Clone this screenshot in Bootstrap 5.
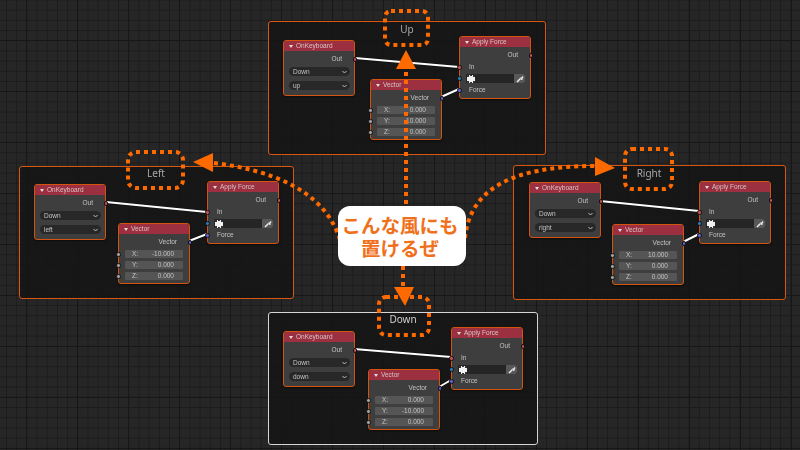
<!DOCTYPE html>
<html lang="ja">
<head>
<meta charset="UTF-8">
<title>Node frames</title>
<link href="https://cdn.jsdelivr.net/npm/bootstrap@5.3.0/dist/css/bootstrap.min.css" rel="stylesheet">
<style>
html, body { height: 100%; }
body {
  overflow: hidden;
  background-color: #262626;
  font-family: "Liberation Sans", sans-serif;
}
.canvas {
  width: 800px; height: 450px;
  background-image:
    linear-gradient(#171717 1px, transparent 1px),
    linear-gradient(90deg, #171717 1px, transparent 1px),
    linear-gradient(#1c1c1c 1px, transparent 1px),
    linear-gradient(90deg, #1c1c1c 1px, transparent 1px);
  background-size: 51px 51px, 51px 51px, 10.2px 10.2px, 10.2px 10.2px;
  background-position: 0 40px, 26px 0, 0 -0.5px, 6px 0;
}
.frame { background: rgba(22,22,22,.92); border: 1px solid #d9560f; border-radius: 3px; }
.frame.active { border-color: #d5d5d5; }
.frame-title { font-family: "Noto Sans", sans-serif; font-size: 10px; line-height: 14px; width: 80px; color: #a8a8a8; text-align: center; filter: blur(.3px); }
.f-up { left: 268px; top: 21px; width: 278px; height: 134px; }
.f-left { left: 19px; top: 166px; width: 275px; height: 133px; }
.f-right { left: 513px; top: 165px; width: 273px; height: 135px; }
.f-down { left: 268px; top: 312px; width: 270px; height: 133px; }
.t-up { left: 367px; top: 22px; }
.t-left { left: 116px; top: 166px; }
.t-right { left: 609px; top: 166px; }
.t-down { left: 363px; top: 312px; color: #cdcdcd; }
.bnode {
  width: 72px; background: #3e3e3e; border: 1px solid #d4540f; border-radius: 3px;
  font-size: 6.5px; line-height: 8px; color: #c4c4c4;
  box-shadow: 0 1px 2px rgba(0,0,0,.5);
  filter: blur(.25px);
}
.bnode-head { height: 10px; padding-left: 5px; background: #9c3040; border-radius: 2px 2px 0 0; color: #d8c4c6; gap: 3px; }
.caret { width: 0; height: 0; border-left: 2px solid transparent; border-right: 2px solid transparent; border-top: 3px solid #ddd; }
.bnode-row { height: 8px; padding: 0 12px 0 9px; margin-top: 4px; position: relative; }
.bnode-drop { height: 9px; margin: 0 4px 5px 5px; padding: 0 3px 0 4px; background: #282828; border-radius: 5px; }
.bnode-drop svg { width: 5px; height: 4px; }
.bnode-num { height: 8px; margin: 0 6px 3px; padding: 0 9px 0 7px; background: #555; position: relative; border-radius: 1px; }
.bnode-color { height: 9px; margin: 3px 5px 3px 6px; background: #252525; border-radius: 1px; position: relative; }
.swatch { width: 8px; height: 8px; margin: .5px 0 0 1px; }
.dropper { width: 11px; height: 9px; background: #585858; border-radius: 0 2px 2px 0; }
.dropper svg { width: 8px; height: 8px; }
.sock { position: absolute; width: 4.5px; height: 4.5px; border-radius: 50%; border: .5px solid #111; top: 2px; }
.sock.out { right: -3px; background: #c7525a; }
.sock.in { left: -3px; background: #c7525a; }
.sock.vec { background: #6363c7; }
.sock.blue { background: #2a7ab0; left: -9px; }
.sock.grey { background: #a1a1a1; left: -9px; }
.n1 { left: 283px; top: 40px; } .n2 { left: 459px; top: 36px; } .n3 { left: 370px; top: 79px; }
.n4 { left: 34px; top: 184px; } .n5 { left: 207px; top: 181px; } .n6 { left: 118px; top: 223px; }
.n7 { left: 529px; top: 182px; } .n8 { left: 699px; top: 181px; } .n9 { left: 612px; top: 224px; }
.n10 { left: 283px; top: 331px; } .n11 { left: 451px; top: 327px; } .n12 { left: 368px; top: 369px; }
.layer { left: 0; top: 0; width: 800px; height: 450px; }
.hot { fill: none; stroke: #ff6a00; stroke-width: 4; stroke-dasharray: 4 4; }
.hot-fill { fill: #ff6a00; }
.wire { fill: none; stroke: #fff; stroke-width: 2; }
.wire-bg { fill: none; stroke: #000; stroke-width: 3; opacity: .5; }
.callout {
  left: 338px; top: 206px; width: 128px; height: 60px; padding-right: 4px; background: #fff; border-radius: 12px;
  font-family: "Noto Sans CJK JP", sans-serif; font-weight: 700; font-size: 19.5px; line-height: 23px; color: #f0711c;
}
</style>
</head>
<body>
<svg width="0" height="0" class="position-absolute">
  <defs>
    <symbol id="chev" viewBox="0 0 5 4"><path d="M.5 1l2 2 2-2" fill="none" stroke="#bbb"/></symbol>
    <symbol id="swatch" viewBox="0 0 8 8"><rect width="8" height="8" fill="#f0f0f0"/><path d="M0 0h2v2H0zM6 0h2v2H6zM0 6h2v2H0zM6 6h2v2H6zM3 0h2v1H3zM3 7h2v1H3z" fill="#333"/></symbol>
    <symbol id="drop" viewBox="0 0 8 8"><path d="M1 7l3.5-3.5" stroke="#eee" stroke-width="1.4"/><path d="M4 2.5l1.5 0 1-1.5 1 1-1 1.5 0 1.5-1 0z" fill="#eee"/></symbol>
  </defs>
</svg>
<div class="canvas position-relative">

  <div class="frame f-up position-absolute"></div>
  <div class="frame f-left position-absolute"></div>
  <div class="frame f-right position-absolute"></div>
  <div class="frame f-down active position-absolute"></div>
  <div class="frame-title t-up position-absolute">Up</div>
  <div class="frame-title t-left position-absolute">Left</div>
  <div class="frame-title t-right position-absolute">Right</div>
  <div class="frame-title t-down position-absolute">Down</div>

  <svg class="layer position-absolute">
    <path class="wire-bg" d="M355 58L459 67M441 97L459 89M106 202L207 212M189 241L207 234M600 201L699 211M683 242L699 234M354 349L451 357M439 387L451 380"/>
    <path class="wire" d="M355 58L459 67M441 97L459 89M106 202L207 212M189 241L207 234M600 201L699 211M683 242L699 234M354 349L451 357M439 387L451 380"/>
  </svg>

  <!-- up -->
  <div class="bnode n1 position-absolute">
    <div class="bnode-head d-flex align-items-center"><span class="caret"></span>OnKeyboard</div>
    <div class="bnode-row text-end mb-1">Out<span class="sock out"></span></div>
    <div class="bnode-drop d-flex justify-content-between align-items-center">Down<svg><use href="#chev"/></svg></div>
    <div class="bnode-drop d-flex justify-content-between align-items-center">up<svg><use href="#chev"/></svg></div>
  </div>
  <div class="bnode n2 position-absolute">
    <div class="bnode-head d-flex align-items-center"><span class="caret"></span>Apply Force</div>
    <div class="bnode-row text-end">Out<span class="sock out"></span></div>
    <div class="bnode-row">In<span class="sock in"></span></div>
    <div class="bnode-color d-flex justify-content-between"><svg class="swatch"><use href="#swatch"/></svg><span class="sock blue"></span><span class="dropper d-flex align-items-center justify-content-center"><svg><use href="#drop"/></svg></span></div>
    <div class="bnode-row mb-1 mt-0">Force<span class="sock in vec"></span></div>
  </div>
  <div class="bnode n3 position-absolute">
    <div class="bnode-head d-flex align-items-center"><span class="caret"></span>Vector</div>
    <div class="bnode-row text-end mb-1">Vector<span class="sock out vec"></span></div>
    <div class="bnode-num d-flex justify-content-between">X:<span>0.000</span><span class="sock grey"></span></div>
    <div class="bnode-num d-flex justify-content-between">Y:<span>10.000</span><span class="sock grey"></span></div>
    <div class="bnode-num d-flex justify-content-between">Z:<span>0.000</span><span class="sock grey"></span></div>
  </div>

  <!-- left -->
  <div class="bnode n4 position-absolute">
    <div class="bnode-head d-flex align-items-center"><span class="caret"></span>OnKeyboard</div>
    <div class="bnode-row text-end mb-1">Out<span class="sock out"></span></div>
    <div class="bnode-drop d-flex justify-content-between align-items-center">Down<svg><use href="#chev"/></svg></div>
    <div class="bnode-drop d-flex justify-content-between align-items-center">left<svg><use href="#chev"/></svg></div>
  </div>
  <div class="bnode n5 position-absolute">
    <div class="bnode-head d-flex align-items-center"><span class="caret"></span>Apply Force</div>
    <div class="bnode-row text-end">Out<span class="sock out"></span></div>
    <div class="bnode-row">In<span class="sock in"></span></div>
    <div class="bnode-color d-flex justify-content-between"><svg class="swatch"><use href="#swatch"/></svg><span class="sock blue"></span><span class="dropper d-flex align-items-center justify-content-center"><svg><use href="#drop"/></svg></span></div>
    <div class="bnode-row mb-1 mt-0">Force<span class="sock in vec"></span></div>
  </div>
  <div class="bnode n6 position-absolute">
    <div class="bnode-head d-flex align-items-center"><span class="caret"></span>Vector</div>
    <div class="bnode-row text-end mb-1">Vector<span class="sock out vec"></span></div>
    <div class="bnode-num d-flex justify-content-between">X:<span>-10.000</span><span class="sock grey"></span></div>
    <div class="bnode-num d-flex justify-content-between">Y:<span>0.000</span><span class="sock grey"></span></div>
    <div class="bnode-num d-flex justify-content-between">Z:<span>0.000</span><span class="sock grey"></span></div>
  </div>

  <!-- right -->
  <div class="bnode n7 position-absolute">
    <div class="bnode-head d-flex align-items-center"><span class="caret"></span>OnKeyboard</div>
    <div class="bnode-row text-end mb-1">Out<span class="sock out"></span></div>
    <div class="bnode-drop d-flex justify-content-between align-items-center">Down<svg><use href="#chev"/></svg></div>
    <div class="bnode-drop d-flex justify-content-between align-items-center">right<svg><use href="#chev"/></svg></div>
  </div>
  <div class="bnode n8 position-absolute">
    <div class="bnode-head d-flex align-items-center"><span class="caret"></span>Apply Force</div>
    <div class="bnode-row text-end">Out<span class="sock out"></span></div>
    <div class="bnode-row">In<span class="sock in"></span></div>
    <div class="bnode-color d-flex justify-content-between"><svg class="swatch"><use href="#swatch"/></svg><span class="sock blue"></span><span class="dropper d-flex align-items-center justify-content-center"><svg><use href="#drop"/></svg></span></div>
    <div class="bnode-row mb-1 mt-0">Force<span class="sock in vec"></span></div>
  </div>
  <div class="bnode n9 position-absolute">
    <div class="bnode-head d-flex align-items-center"><span class="caret"></span>Vector</div>
    <div class="bnode-row text-end mb-1">Vector<span class="sock out vec"></span></div>
    <div class="bnode-num d-flex justify-content-between">X:<span>10.000</span><span class="sock grey"></span></div>
    <div class="bnode-num d-flex justify-content-between">Y:<span>0.000</span><span class="sock grey"></span></div>
    <div class="bnode-num d-flex justify-content-between">Z:<span>0.000</span><span class="sock grey"></span></div>
  </div>

  <!-- down -->
  <div class="bnode n10 position-absolute">
    <div class="bnode-head d-flex align-items-center"><span class="caret"></span>OnKeyboard</div>
    <div class="bnode-row text-end mb-1">Out<span class="sock out"></span></div>
    <div class="bnode-drop d-flex justify-content-between align-items-center">Down<svg><use href="#chev"/></svg></div>
    <div class="bnode-drop d-flex justify-content-between align-items-center">down<svg><use href="#chev"/></svg></div>
  </div>
  <div class="bnode n11 position-absolute">
    <div class="bnode-head d-flex align-items-center"><span class="caret"></span>Apply Force</div>
    <div class="bnode-row text-end">Out<span class="sock out"></span></div>
    <div class="bnode-row">In<span class="sock in"></span></div>
    <div class="bnode-color d-flex justify-content-between"><svg class="swatch"><use href="#swatch"/></svg><span class="sock blue"></span><span class="dropper d-flex align-items-center justify-content-center"><svg><use href="#drop"/></svg></span></div>
    <div class="bnode-row mb-1 mt-0">Force<span class="sock in vec"></span></div>
  </div>
  <div class="bnode n12 position-absolute">
    <div class="bnode-head d-flex align-items-center"><span class="caret"></span>Vector</div>
    <div class="bnode-row text-end mb-1">Vector<span class="sock out vec"></span></div>
    <div class="bnode-num d-flex justify-content-between">X:<span>0.000</span><span class="sock grey"></span></div>
    <div class="bnode-num d-flex justify-content-between">Y:<span>-10.000</span><span class="sock grey"></span></div>
    <div class="bnode-num d-flex justify-content-between">Z:<span>0.000</span><span class="sock grey"></span></div>
  </div>

  <svg class="layer position-absolute">
    <rect class="hot" x="385" y="11" width="43" height="34" rx="6"/>
    <rect class="hot" x="128" y="152" width="55" height="36" rx="8"/>
    <rect class="hot" x="625" y="149" width="47" height="40" rx="7"/>
    <rect class="hot" x="379" y="297" width="50" height="38" rx="7"/>
    <path class="hot" d="M406 72V206M403 266V288"/>
    <path class="hot" d="M214 163C270 170 325 190 340 240"/>
    <path class="hot" d="M465 238C470 190 510 166 595 166"/>
    <path class="hot-fill" d="M406 50L416 69H396Z"/>
    <path class="hot-fill" d="M405 306L394 287H414Z"/>
    <path class="hot-fill" d="M193 162L213 153V172Z"/>
    <path class="hot-fill" d="M615 168L595 157V176Z"/>
  </svg>

  <div class="callout position-absolute d-flex align-items-center justify-content-center text-center">
    <div>こんな風にも<br>置けるぜ</div>
  </div>
</div>
<script src="https://cdn.jsdelivr.net/npm/bootstrap@5.3.0/dist/js/bootstrap.bundle.min.js"></script>
</body>
</html>
